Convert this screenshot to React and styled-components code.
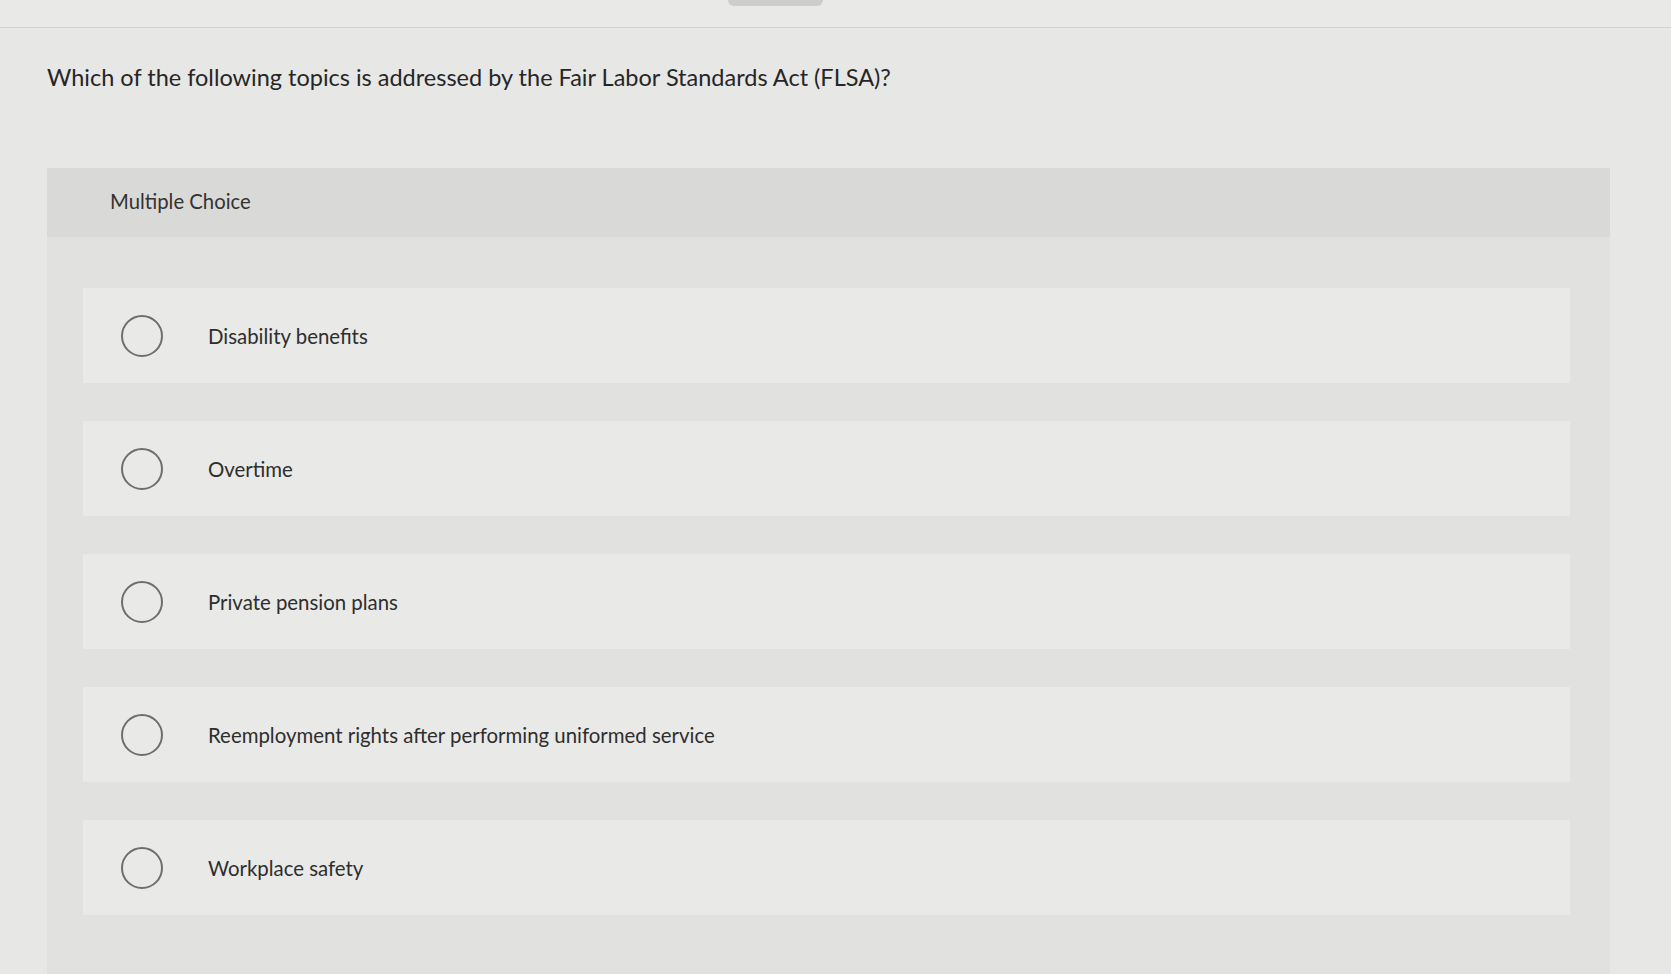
import React from 'react'
import styled, { createGlobalStyle } from 'styled-components'

const GlobalStyle = createGlobalStyle`
  html, body {
    margin: 0;
    padding: 0;
    background: #e7e7e5;
    font-family: Lato, "Open Sans", "Liberation Sans", sans-serif;
    color: #2b2b2b;
  }
  #root {
    min-height: 974px;
  }
`

const TopBar = styled.div`
  height: 27px;
  border-bottom: 1px solid #d2d2d0;
  background: #e9e9e7;
  padding-left: 728px;
`

const TopTab = styled.div`
  width: 95px;
  height: 6px;
  background: #cdcdcb;
  border-radius: 0 0 6px 6px;
`

const Main = styled.main`
  padding: 0 61px 0 47px;
`

const Question = styled.h1`
  margin: 34px 0 0;
  font-size: 23.5px;
  line-height: 30px;
  font-weight: 400;
  color: #262626;
`

const Card = styled.section`
  margin-top: 76px;
  background: #e1e1df;
  min-height: 806px;
`

const CardHeader = styled.div`
  height: 69px;
  display: flex;
  align-items: center;
  padding-left: 63px;
  padding-bottom: 3px;
  box-sizing: border-box;
  background: #d9d9d7;
  font-size: 20.3px;
  color: #333;
`

const Options = styled.div`
  display: flex;
  flex-direction: column;
  gap: 38px;
  padding: 51px 40px 40px 36px;
`

const Option = styled.label`
  height: 95px;
  display: flex;
  align-items: center;
  padding-left: 38px;
  background: #e9e9e7;
  cursor: pointer;
`

const Radio = styled.span`
  width: 38px;
  height: 38px;
  border: 2px solid #6e6e6c;
  border-radius: 50%;
  flex-shrink: 0;
`

const OptionText = styled.span`
  margin-left: 45px;
  font-size: 20.4px;
  color: #2e2e2e;
`

const CHOICES = [
  'Disability benefits',
  'Overtime',
  'Private pension plans',
  'Reemployment rights after performing uniformed service',
  'Workplace safety',
]

export default function App() {
  return (
    <>
      <GlobalStyle />
      <TopBar>
        <TopTab />
      </TopBar>
      <Main>
        <Question>
          Which of the following topics is addressed by the Fair Labor Standards Act (FLSA)?
        </Question>
        <Card>
          <CardHeader>Multiple Choice</CardHeader>
          <Options>
            {CHOICES.map(choice => (
              <Option key={choice}>
                <Radio />
                <OptionText>{choice}</OptionText>
              </Option>
            ))}
          </Options>
        </Card>
      </Main>
    </>
  )
}
